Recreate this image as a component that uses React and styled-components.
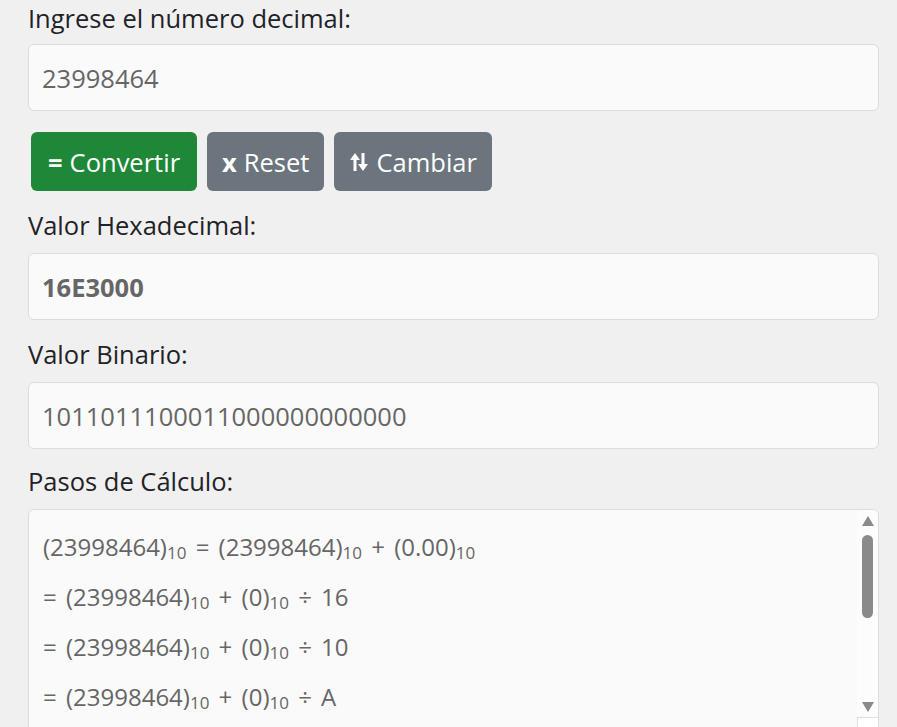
import React from "react";
import styled, { createGlobalStyle } from "styled-components";

const GlobalStyle = createGlobalStyle`
  html, body {
    margin: 0;
    padding: 0;
    background: #f0f0f0;
  }
  body {
    font-family: "Open Sans", "Noto Sans", "Liberation Sans", sans-serif;
    color: #212529;
  }
`;

const Page = styled.div`
  padding: 0 18px 0 28px;
`;

const Group = styled.div`
  margin-bottom: ${(props) => props.$gap ?? 16}px;
`;

const Label = styled.label`
  display: block;
  font-size: 25.5px;
  line-height: 36px;
  margin-bottom: ${(props) => (props.$tight ? 8 : 10)}px;
  color: #1f2327;
`;

const Field = styled.input`
  box-sizing: border-box;
  display: block;
  width: 100%;
  height: 67px;
  padding: 0 13px;
  margin: 0;
  border: 1px solid #dcdcdc;
  border-radius: 6px;
  background: #fafafa;
  font-family: inherit;
  font-size: 25.5px;
  color: #666;
  font-weight: ${(props) => (props.$bold ? 700 : 400)};
  outline: none;
`;

const Toolbar = styled.div`
  display: flex;
  gap: 10px;
  padding-left: 3px;
  margin: 21px 0 16px;
`;

const Button = styled.button`
  display: flex;
  align-items: center;
  gap: 7px;
  height: 59px;
  padding: 0 ${(props) => (props.$variant === "success" ? 17 : 15)}px;
  border: none;
  border-radius: 6px;
  background: ${(props) => (props.$variant === "success" ? "#1e8738" : "#6c757d")};
  color: #fff;
  font-family: inherit;
  font-size: 25.5px;
  cursor: pointer;
`;

const Glyph = styled.span`
  font-weight: 700;
`;

const StepsFrame = styled.div`
  position: relative;
  box-sizing: border-box;
  height: 230px;
  border: 1px solid #dcdcdc;
  border-radius: 6px;
  background: #fafafa;
  overflow: hidden;
`;

const Steps = styled.div`
  height: 100%;
  overflow: hidden;
  padding: 12px 14px;
  box-sizing: border-box;
  font-size: 24px;
  color: #666;
`;

const StepLine = styled.div`
  line-height: 50px;
  white-space: nowrap;
  word-spacing: 3px;
`;

const Sub = styled.sub`
  font-size: 17px;
  line-height: 0;
  vertical-align: -3px;
  word-spacing: 0;
`;

/* drawn scrollbar that lies over the right edge of the steps box */
const ScrollBar = styled.div`
  position: absolute;
  top: 0;
  right: 0;
  bottom: 0;
  width: 21px;
  display: flex;
  flex-direction: column;
  background: #fcfcfc;
`;

const ArrowButton = styled.div`
  flex: 0 0 21px;
  display: flex;
  align-items: center;
  justify-content: center;

  &::before {
    content: "";
    width: 0;
    height: 0;
    border-left: 6.5px solid transparent;
    border-right: 6.5px solid transparent;
    ${(props) => props.$down ? "border-top: 10px solid #8a8a8a;" : "border-bottom: 10px solid #8a8a8a;"}
  }
`;

const Track = styled.div`
  flex: 1;
  padding: 4px 5px;
`;

const Thumb = styled.div`
  height: 83px;
  border-radius: 6px;
  background: #8a8a8a;
`;

const Corner = styled.div`
  flex: 0 0 21px;
  box-sizing: border-box;
  background: #fff;
  border: 1px solid #e0e0e0;
  border-right: none;
  border-bottom: none;
`;

function SwapIcon() {
    return (
        <svg width="20" height="20" viewBox="0 0 20 20" fill="#fff">
            <rect x="4.5" y="5" width="3" height="14" />
            <polygon points="1,8 6,1 11,8" />
            <rect x="12.5" y="1" width="3" height="14" />
            <polygon points="9,12 14,19 19,12" />
        </svg>
    );
}

function Num({value, base}) {
    return (
        <>({value})<Sub>{base}</Sub></>
    );
}

const steps = [
    <>
        <Num value="23998464" base="10" /> = <Num value="23998464" base="10" /> + <Num value="0.00" base="10" />
    </>,
    <>= <Num value="23998464" base="10" /> + <Num value="0" base="10" /> ÷ 16</>,
    <>= <Num value="23998464" base="10" /> + <Num value="0" base="10" /> ÷ 10</>,
    <>= <Num value="23998464" base="10" /> + <Num value="0" base="10" /> ÷ A</>,
    <>= <Num value="16E3000" base="16" /> + <Num value="0" base="16" /></>,
    <>= <Num value="16E3000" base="16" /></>
];

export default function App() {
    return (
        <>
            <GlobalStyle />
            <Page>
                <Group $gap={0}>
                    <Label $tight htmlFor="decimal">Ingrese el número decimal:</Label>
                    <Field id="decimal" defaultValue="23998464" />
                </Group>
                <Toolbar>
                    <Button $variant="success"><Glyph>=</Glyph>Convertir</Button>
                    <Button><Glyph>x</Glyph>Reset</Button>
                    <Button><SwapIcon />Cambiar</Button>
                </Toolbar>
                <Group>
                    <Label htmlFor="hex">Valor Hexadecimal:</Label>
                    <Field id="hex" $bold readOnly value="16E3000" />
                </Group>
                <Group $gap={14}>
                    <Label htmlFor="bin">Valor Binario:</Label>
                    <Field id="bin" readOnly value="1011011100011000000000000" />
                </Group>
                <Group>
                    <Label>Pasos de Cálculo:</Label>
                    <StepsFrame>
                        <Steps>
                            {
                            steps.map((s, i) => (
                                <StepLine key={i}>{s}</StepLine>
                            ))
                        } </Steps>
                        <ScrollBar>
                            <ArrowButton />
                            <Track><Thumb /></Track>
                            <ArrowButton $down />
                            <Corner />
                        </ScrollBar>
                    </StepsFrame>
                </Group>
            </Page>
        </>
    );
}
